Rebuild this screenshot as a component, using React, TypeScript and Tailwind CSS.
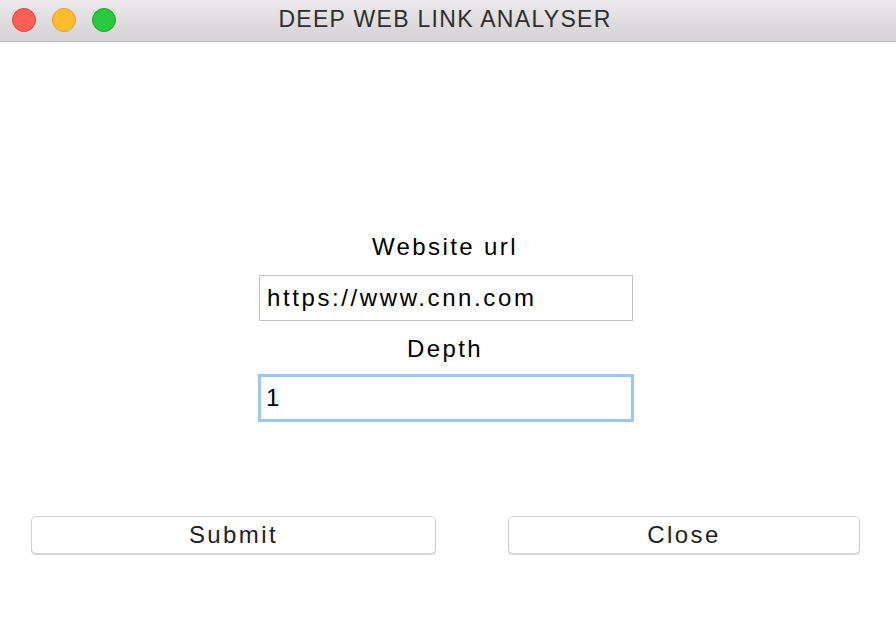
export default function App() {
  return (
    <div className="w-full h-screen bg-white flex flex-col font-['Liberation_Sans',Arial,sans-serif]">
      <div className="h-[42px] shrink-0 flex items-center relative border-b border-[#b8b6b8] bg-gradient-to-b from-[#ebe9eb] to-[#d4d2d4]">
        <div className="flex gap-4 pl-3 -mt-[2px]">
          <span className="w-6 h-6 rounded-full bg-[#fd5f57] border border-[#e1453f]" />
          <span className="w-6 h-6 rounded-full bg-[#febc2e] border border-[#dfa125]" />
          <span className="w-6 h-6 rounded-full bg-[#29c840] border border-[#1daa2b]" />
        </div>
        <div className="absolute inset-0 flex items-center justify-center pr-[6px] -mt-[2px] text-[23px] tracking-[1.3px] text-[#2e2e2e]">
          DEEP WEB LINK ANALYSER
        </div>
      </div>

      <div className="flex flex-col items-center pt-[191px] pr-[4px] text-[24px] text-black tracking-[2.4px]">
        <label className="h-7 leading-7 -ml-[2px]">Website url</label>
        <input
          className="mt-[14px] w-[374px] h-[46px] border border-[#c3c3c3] px-[7px] outline-none text-[24px] tracking-[2.6px]"
          defaultValue="https://www.cnn.com"
        />
        <label className="mt-[14px] h-7 leading-7 -ml-[2px]">Depth</label>
        <input
          className="mt-[11px] w-[376px] h-[48px] border-[3px] border-[#9ec6f3] px-[5px] outline-none text-[24px]"
          defaultValue="1"
        />
      </div>

      <div className="flex justify-between pl-[31px] pr-[36px] mt-[94px] text-[24px] tracking-[2.4px] text-[#222]">
        <button className="w-[405px] h-[38px] bg-white border border-[#d2d2d2] rounded-[5px] shadow-[0_1px_1px_rgba(0,0,0,0.18)]">
          Submit
        </button>
        <button className="w-[352px] h-[38px] bg-white border border-[#d2d2d2] rounded-[5px] shadow-[0_1px_1px_rgba(0,0,0,0.18)]">
          Close
        </button>
      </div>
    </div>
  );
}
